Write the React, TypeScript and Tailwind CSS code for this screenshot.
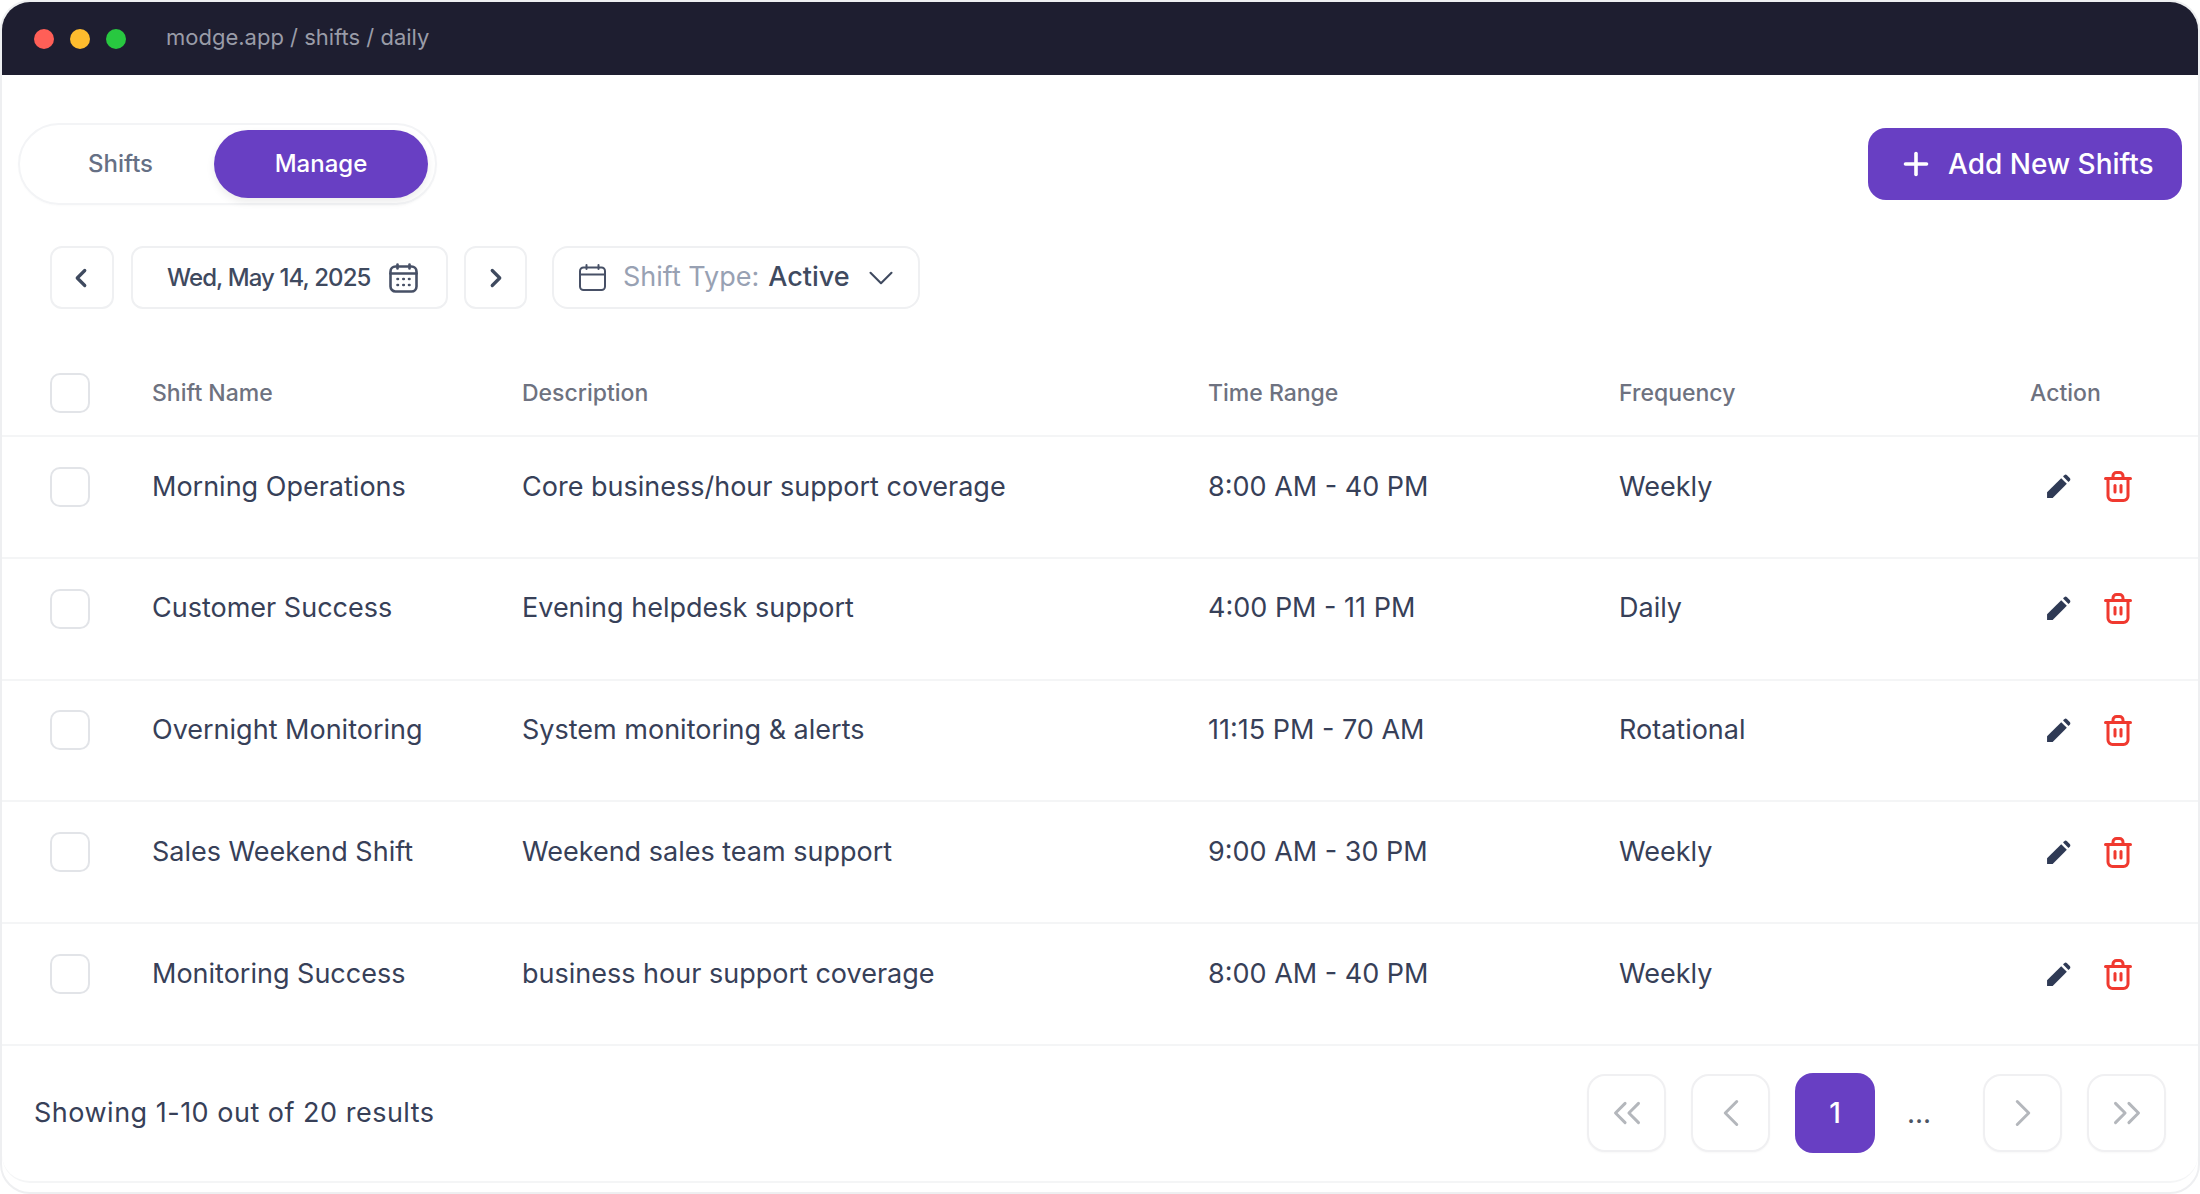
import React from "react";
import { ChevronLeft, ChevronRight, ChevronDown, ChevronsLeft, ChevronsRight, Plus } from "lucide-react";

const rows = [
  ["Morning Operations", "Core business/hour support coverage", "8:00 AM - 40 PM", "Weekly"],
  ["Customer Success", "Evening helpdesk support", "4:00 PM - 11 PM", "Daily"],
  ["Overnight Monitoring", "System monitoring & alerts", "11:15 PM - 70 AM", "Rotational"],
  ["Sales Weekend Shift", "Weekend sales team support", "9:00 AM - 30 PM", "Weekly"],
  ["Monitoring Success", "business hour support coverage", "8:00 AM - 40 PM", "Weekly"],
];

function Pencil() {
  return (
    <svg width="25" height="25" viewBox="0 0 24 24" fill="#2f3a55" className="shrink-0">
      <path d="M1 23V17.6L14.6 4L20 9.4L6.4 23Z" />
      <path d="M16.4 2.4L17.6 1.2a1.8 1.8 0 0 1 2.5 0L22.8 3.9a1.8 1.8 0 0 1 0 2.5L21.6 7.6Z" />
    </svg>
  );
}

function Trash() {
  return (
    <svg width="28" height="31" viewBox="0 0 28 31" fill="none" stroke="#f0392f" strokeWidth="3" strokeLinecap="round" strokeLinejoin="round" className="shrink-0">
      <path d="M1.5 7.5H26.5" />
      <path d="M9 7V5a3.5 3.5 0 0 1 3.5-3.5h3A3.5 3.5 0 0 1 19 5v2" />
      <path d="M4 8v17a4.5 4.5 0 0 0 4.5 4.5h11A4.5 4.5 0 0 0 24 25V8" />
      <path d="M11 14.5V21" />
      <path d="M17 14.5V21" />
    </svg>
  );
}

function Checkbox() {
  return <div className="w-[40px] h-[40px] rounded-[10px] border-2 border-[#e2e4e8] bg-white" />;
}

function PageButton({ children }: { children: React.ReactNode }) {
  return (
    <div className="w-[79px] h-[78px] rounded-[18px] border-2 border-[#f0f0f2] bg-white flex items-center justify-center text-[#b4b7bc] shadow-[0_1px_2px_rgba(0,0,0,0.03)]">
      {children}
    </div>
  );
}

const gridCols = "grid grid-cols-[102px_370px_686px_411px_411px_1fr] items-center pl-[48px]";

export default function App() {
  return (
    <div className="w-[2200px] h-[1194px] bg-white font-['Inter',sans-serif]">
      <div className="w-full h-full border-2 border-[#eeeff1] rounded-[30px] overflow-hidden flex flex-col">
        <div className="h-[73px] bg-[#1e1e30] flex items-center pl-[32px] shrink-0">
          <div className="flex gap-[16px]">
            <div className="w-[20px] h-[20px] rounded-full bg-[#ff5f57]" />
            <div className="w-[20px] h-[20px] rounded-full bg-[#febc2e]" />
            <div className="w-[20px] h-[20px] rounded-full bg-[#28c840]" />
          </div>
          <div className="ml-[40px] pb-[2px] text-[22px] text-[#9a9ca8]">modge.app / shifts / daily</div>
        </div>

        <div className="flex justify-between items-center pl-[16px] pr-[16px] pt-[48px]">
          <div className="w-[419px] h-[82px] rounded-full border-2 border-[#f3f4f6] flex items-center pl-[4px] shadow-[0_1px_2px_rgba(0,0,0,0.02)]">
            <div className="w-[190px] pl-[3px] text-center text-[24px] font-medium text-[#667085]">Shifts</div>
            <div className="w-[214px] h-[68px] rounded-full bg-[#683fc3] text-white text-[24px] font-medium flex items-center justify-center shadow-[0_4px_8px_rgba(0,0,0,0.08)]">Manage</div>
          </div>
          <div className="w-[314px] h-[72px] rounded-[18px] bg-[#683fc3] text-white flex items-center pl-[30px] gap-[14px] text-[28px] font-medium">
            <Plus size={36} strokeWidth={2.4} />
            <span>Add New Shifts</span>
          </div>
        </div>

        <div className="flex items-center pl-[48px] pt-[41px] text-[#3f4a5f]">
          <div className="w-[64px] h-[63px] rounded-[12px] border-2 border-[#eff0f2] flex items-center justify-center">
            <ChevronLeft size={30} strokeWidth={2.6} className="-ml-[2px]" />
          </div>
          <div className="ml-[17px] w-[317px] h-[63px] rounded-[12px] border-2 border-[#eff0f2] flex items-center pl-[34px] text-[24px] font-medium tracking-[-0.9px]">
            <span>Wed, May 14, 2025</span>
            <svg width="29" height="30" viewBox="0 0 29 30" fill="none" stroke="#475066" strokeWidth="2.6" strokeLinecap="round" className="ml-[18px] shrink-0">
              <rect x="1.5" y="3.5" width="26" height="25" rx="5" />
              <path d="M1.5 10.5H27.5" />
              <path d="M8.5 1.5V5.5" />
              <path d="M20.5 1.5V5.5" />
              <path d="M8.5 16H9M14.3 16H14.8M20 16H20.5M8.5 22H9M14.3 22H14.8M20 22H20.5" />
            </svg>
          </div>
          <div className="ml-[16px] w-[63px] h-[63px] rounded-[12px] border-2 border-[#eff0f2] flex items-center justify-center">
            <ChevronRight size={30} strokeWidth={2.6} />
          </div>
          <div className="ml-[25px] w-[368px] h-[63px] rounded-[16px] border-2 border-[#eff0f2] flex items-center pl-[25px] text-[27px]">
            <svg width="27" height="27" viewBox="0 0 27 27" fill="none" stroke="#475066" strokeWidth="2" strokeLinecap="round" strokeLinejoin="round" className="shrink-0">
              <rect x="1" y="3.5" width="25" height="22.5" rx="3.5" />
              <path d="M1 10.5H26" />
              <path d="M7.5 1V5" />
              <path d="M19.5 1V5" />
            </svg>
            <span className="ml-[17px] text-[#98a1b3]">Shift Type:</span>
            <span className="ml-[9px] font-medium text-[#3f4a5f]">Active</span>
            <ChevronDown size={42} strokeWidth={1.2} className="ml-[10px]" />
          </div>
        </div>

        <div className={`${gridCols} pt-[63px] h-[128px] pb-[21px] text-[23px] font-medium text-[#6e7280] border-b-2 border-[#f4f5f6] shrink-0`}>
          <Checkbox />
          <div>Shift Name</div>
          <div>Description</div>
          <div>Time Range</div>
          <div>Frequency</div>
          <div>Action</div>
        </div>

        {rows.map((r, i) => (
          <div key={i} className={`${gridCols} h-[121.8px] pb-[20px] text-[27px] text-[#374058] border-b-2 border-[#f4f5f6] shrink-0`}>
            <Checkbox />
            <div>{r[0]}</div>
            <div>{r[1]}</div>
            <div>{r[2]}</div>
            <div>{r[3]}</div>
            <div className="flex items-center gap-[33px] pl-[16px]">
              <Pencil />
              <Trash />
            </div>
          </div>
        ))}

        <div className="h-[137px] flex items-center justify-between pl-[32px] pr-[32px] border-b-2 border-[#f4f5f6] rounded-b-[28px] shrink-0">
          <div className="text-[27px] tracking-[0.5px] text-[#374058]">Showing 1-10 out of 20 results</div>
          <div className="flex items-center gap-[25px] text-[#b4b7bc]">
            <PageButton><ChevronsLeft size={46} strokeWidth={1.55} /></PageButton>
            <PageButton><ChevronLeft size={46} strokeWidth={1.55} /></PageButton>
            <div className="w-[80px] h-[80px] rounded-[18px] bg-[#683fc3] text-white text-[28px] font-medium flex items-center justify-center">1</div>
            <div className="w-[58px] pr-[20px] text-center text-[28px] text-[#4b5563]">...</div>
            <PageButton><ChevronRight size={46} strokeWidth={1.55} /></PageButton>
            <PageButton><ChevronsRight size={46} strokeWidth={1.55} /></PageButton>
          </div>
        </div>
      </div>
    </div>
  );
}
